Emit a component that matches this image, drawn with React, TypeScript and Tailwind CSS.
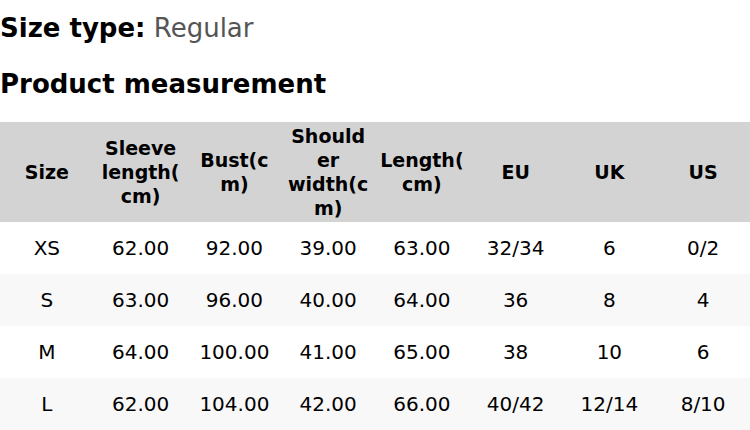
const headers = ['Size', 'Sleeve length(cm)', 'Bust(cm)', 'Shoulder width(cm)', 'Length(cm)', 'EU', 'UK', 'US'];

const rows = [
  ['XS', '62.00', '92.00', '39.00', '63.00', '32/34', '6', '0/2'],
  ['S', '63.00', '96.00', '40.00', '64.00', '36', '8', '4'],
  ['M', '64.00', '100.00', '41.00', '65.00', '38', '10', '6'],
  ['L', '62.00', '104.00', '42.00', '66.00', '40/42', '12/14', '8/10'],
];

export default function App() {
  return (
    <div className="w-[750px] bg-white text-black" style={{ fontFamily: '"DejaVu Sans", sans-serif' }}>
      <div className="text-[26px] leading-[56px]">
        <span className="font-bold">Size type:</span> <span className="text-[#555555]">Regular</span>
      </div>
      <h2 className="text-[26px] leading-[56px] font-bold">Product measurement</h2>

      <table className="mt-[10px] w-full table-fixed border-collapse">
        <thead>
          <tr className="bg-[#d3d3d3] h-[100px]">
            {headers.map((h) => (
              <th key={h} className="px-1 py-[2px] text-center align-middle text-[19px] leading-[24px] font-bold break-words">
                {h}
              </th>
            ))}
          </tr>
        </thead>
        <tbody>
          {rows.map((row, i) => (
            <tr key={row[0]} className={i % 2 === 1 ? 'bg-[#f8f8f8] h-[52px]' : 'bg-white h-[52px]'}>
              {row.map((cell, j) => (
                <td key={j} className="px-1 text-center align-middle text-[20px] leading-[24px]">
                  {cell}
                </td>
              ))}
            </tr>
          ))}
        </tbody>
      </table>
    </div>
  );
}
